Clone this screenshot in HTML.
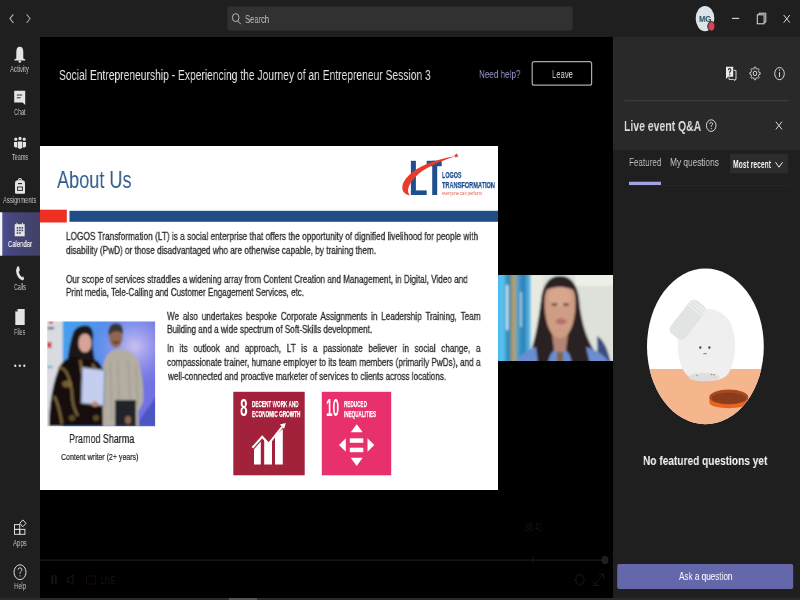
<!DOCTYPE html>
<html><head><meta charset="utf-8">
<style>
*{margin:0;padding:0;box-sizing:border-box}
html,body{width:800px;height:600px;overflow:hidden;background:#000;font-family:"Liberation Sans",sans-serif}
.a{position:absolute}
.tx{position:absolute;will-change:transform;white-space:nowrap;line-height:1;transform-origin:0 0;font-family:"Liberation Sans",sans-serif}
svg{position:absolute;left:0;top:0}
</style></head><body>
<svg width="800" height="600" viewBox="0 0 800 600">
<defs>
<linearGradient id="calg" x1="0" y1="0" x2="1" y2="0"><stop offset="0" stop-color="#4d509a"/><stop offset="0.3" stop-color="#45467a"/><stop offset="1" stop-color="#414168"/></linearGradient>
<linearGradient id="phbg" x1="0" y1="0" x2="1" y2="0.3"><stop offset="0" stop-color="#38aaf0"/><stop offset="0.55" stop-color="#5a8cea"/><stop offset="1" stop-color="#7272e2"/></linearGradient>
<radialGradient id="phglow" cx="0.8" cy="0.25" r="0.35"><stop offset="0" stop-color="#d8c8f4" stop-opacity="0.9"/><stop offset="1" stop-color="#a0a0f0" stop-opacity="0"/></radialGradient>
<linearGradient id="curt" x1="0" y1="0" x2="1" y2="0"><stop offset="0" stop-color="#3fb0e8"/><stop offset="0.2" stop-color="#5ec4f0"/><stop offset="0.35" stop-color="#2b86b8"/><stop offset="0.5" stop-color="#c8a060"/><stop offset="0.6" stop-color="#4aa0d0"/><stop offset="0.75" stop-color="#2a80b4"/><stop offset="0.9" stop-color="#5ab8e8"/><stop offset="1" stop-color="#e0e4dc"/></linearGradient>
<filter id="blur1" x="-5%" y="-5%" width="110%" height="110%"><feGaussianBlur stdDeviation="0.9"/></filter>
<clipPath id="vclip"><rect x="498" y="275" width="115" height="86"/></clipPath>
<clipPath id="pclip"><rect x="47.2" y="321.4" width="107.9" height="104.9"/></clipPath>
<clipPath id="eclip"><ellipse cx="705.4" cy="346.4" rx="58.4" ry="77.9"/></clipPath>
</defs>
<!-- backgrounds -->
<rect x="0" y="0" width="800" height="37" fill="#201f1f"/>
<rect x="0" y="37" width="40" height="563" fill="#201f1f"/>
<rect x="613" y="37" width="187" height="113" fill="#2a2929"/>
<rect x="613" y="150" width="187" height="450" fill="#201f1f"/>
<rect x="0" y="598" width="800" height="2" fill="#2a2a2a"/>
<rect x="229" y="598" width="28" height="2" fill="#555"/>
<!-- top bar -->
<polyline points="13.4,14.3 9.9,18.6 13.4,22.9" fill="none" stroke="#b4b4b4" stroke-width="1.1"/>
<polyline points="26.6,14.3 30.1,18.6 26.6,22.9" fill="none" stroke="#9a9a9a" stroke-width="1.1"/>
<rect x="227.5" y="6.6" width="345" height="24" rx="2" fill="#323131"/>
<ellipse cx="235.7" cy="17.6" rx="3.3" ry="4" fill="none" stroke="#b8b8b8" stroke-width="1"/>
<line x1="237.8" y1="21" x2="240.8" y2="24.2" stroke="#b8b8b8" stroke-width="1"/>
<ellipse cx="705" cy="18.6" rx="9.3" ry="12.7" fill="#dce4e9"/>
<ellipse cx="711.4" cy="26.3" rx="3.6" ry="4.8" fill="#d84452" stroke="#201f1f" stroke-width="1"/>
<line x1="732" y1="18.4" x2="739.2" y2="18.4" stroke="#dcdcdc" stroke-width="1.1"/>
<rect x="757.3" y="14.8" width="6.8" height="9" fill="none" stroke="#dcdcdc" stroke-width="1"/>
<polyline points="759,14.8 759,13.2 765.8,13.2 765.8,22.2 764.1,22.2" fill="none" stroke="#dcdcdc" stroke-width="1"/>
<line x1="783.7" y1="15" x2="789.8" y2="22.7" stroke="#dcdcdc" stroke-width="1"/>
<line x1="789.8" y1="15" x2="783.7" y2="22.7" stroke="#dcdcdc" stroke-width="1"/>
<!-- rail -->
<rect x="0" y="212.3" width="40" height="43.4" fill="url(#calg)"/>
<rect x="0" y="212.3" width="2.3" height="43.4" fill="#f4f4f4"/>
<g fill="#e4e4e4">
 <!-- bell -->
 <path d="M16.3,58.5 L16.3,52 Q16.3,46.7 19.8,46.7 Q23.3,46.7 23.3,52 L23.3,58.5 L25.3,59.6 L25.3,60.6 L14.4,60.6 L14.4,59.6 Z"/>
 <ellipse cx="19.8" cy="61.6" rx="1.3" ry="1.2"/>
 <!-- chat -->
 <path d="M14.2,90.8 L25.2,90.8 L25.2,105 L22.6,102.5 L14.2,102.5 Z"/>
</g>
<g stroke="#201f1f" stroke-width="0.9"><line x1="16.8" y1="95" x2="22.2" y2="95"/><line x1="16.8" y1="97.8" x2="20.6" y2="97.8"/></g>
<g fill="#e4e4e4">
 <!-- teams -->
 <ellipse cx="15.8" cy="139.2" rx="1.5" ry="1.6"/><ellipse cx="20" cy="138.4" rx="1.6" ry="1.7"/><ellipse cx="24.2" cy="139.2" rx="1.5" ry="1.6"/>
 <path d="M14,142 L17.2,142 L17.2,147.6 Q15.4,147.6 14,146.4 Z"/>
 <path d="M22.8,142 L26,142 L26,146.4 Q24.6,147.6 22.8,147.6 Z"/>
 <path d="M17.8,141.4 L22.2,141.4 L22.2,147.8 Q20,150 17.8,147.8 Z"/>
 <!-- assignments backpack -->
 <path d="M15,183.5 Q15,180.3 18,180.3 L22,180.3 Q25,180.3 25,183.5 L25,192.8 Q25,193.8 24,193.8 L16,193.8 Q15,193.8 15,192.8 Z"/>
 <ellipse cx="20" cy="179.6" rx="2" ry="1.7"/>
 <!-- calendar -->
 <path d="M14.7,224.2 L24.7,224.2 L24.7,236.3 L14.7,236.3 Z"/>
 <rect x="16.4" y="222.8" width="1" height="2"/><rect x="22" y="222.8" width="1" height="2"/>
 <!-- calls -->
 <path d="M17.2,266.4 L19,266.4 L19.8,270.6 L18.7,272 Q19.6,275.5 22,277.2 L23.2,276.3 L24.2,278.9 L22.6,280.4 Q16.6,278.4 16,270.4 Z"/>
 <!-- files -->
 <path d="M17.6,309 L24.7,309 L24.7,325 L15.3,325 L15.3,311.6 Z"/>
 <!-- dots -->
 <ellipse cx="15.3" cy="365.8" rx="1.1" ry="1.3"/><ellipse cx="19.8" cy="365.8" rx="1.1" ry="1.3"/><ellipse cx="24.3" cy="365.8" rx="1.1" ry="1.3"/>
</g>
<rect x="17.6" y="187" width="4.8" height="3.4" fill="none" stroke="#201f1f" stroke-width="0.9"/>
<line x1="18" y1="183.6" x2="22" y2="183.6" stroke="#201f1f" stroke-width="1.1"/>
<ellipse cx="20" cy="179.6" rx="0.8" ry="0.6" fill="#201f1f"/>
<g fill="#47467a"><rect x="16.7" y="227" width="1.6" height="1.6"/><rect x="19.1" y="227" width="1.6" height="1.6"/><rect x="21.5" y="227" width="1.6" height="1.6"/><rect x="16.7" y="229.6" width="1.6" height="1.6"/><rect x="19.1" y="229.6" width="1.6" height="1.6"/><rect x="21.5" y="229.6" width="1.6" height="1.6"/><rect x="16.7" y="232.2" width="1.6" height="1.6"/><rect x="19.1" y="232.2" width="1.6" height="1.6"/></g>
<path d="M15.3,311.6 L17.6,311.6 L17.6,309" fill="#201f1f"/>
<!-- apps -->
<g fill="none" stroke="#dcdcdc" stroke-width="1">
 <rect x="14.5" y="524.6" width="5.2" height="4.8"/><rect x="14.5" y="529.4" width="5.2" height="4.9"/><rect x="19.7" y="529.4" width="5.2" height="4.9"/>
 <path d="M22.8,519.9 L26,523.3 L22.8,526.8 L19.8,523.3 Z"/>
 <ellipse cx="20" cy="572.2" rx="6" ry="7.4"/>
</g>
<path d="M18.1,569.8 Q18.1,567.8 20,567.8 Q21.9,567.8 21.9,569.8 Q21.9,571 20.6,571.8 Q20,572.3 20,573.8" fill="none" stroke="#dcdcdc" stroke-width="0.9"/>
<ellipse cx="20" cy="575.8" rx="0.6" ry="0.6" fill="#dcdcdc"/>
<!-- main title area -->
<rect x="532.2" y="61.6" width="59.4" height="23.6" rx="2" fill="none" stroke="#a9a9a9" stroke-width="1.2"/>
<!-- slide -->
<rect x="40" y="146" width="458" height="344" fill="#ffffff"/>
<rect x="40" y="209.7" width="26.8" height="12.8" fill="#ee3022"/>
<rect x="69.5" y="210.8" width="428.5" height="11" fill="#1f4e86"/>
<!-- logo -->
<g fill="#1e4f8e">
 <rect x="410.9" y="160.8" width="5" height="34.2"/><rect x="410.9" y="190.4" width="15.8" height="4.6"/>
 <rect x="426.7" y="160.8" width="15" height="5.4"/><rect x="432.2" y="160.8" width="5" height="34.2"/>
</g>
<path d="M409.8,195.5 C400,193.5 399,183 412,172.5 C422,164.5 438,159 455.5,156 C441,161 427,167 419,173.5 C409.5,182 405.5,190 409.8,195.5 Z" fill="#e93b2c"/>
<path d="M456.3,152.9 L457,154.8 L458.8,154.9 L457.4,156 L457.9,157.8 L456.3,156.7 L454.7,157.8 L455.2,156 L453.8,154.9 L455.6,154.8 Z" fill="#e93b2c"/>
<!-- photo -->
<g clip-path="url(#pclip)"><g filter="url(#blur1)">
 <rect x="45" y="319" width="112" height="110" fill="url(#phbg)"/>
 <rect x="45" y="319" width="112" height="110" fill="url(#phglow)"/>
 <path d="M135,426.3 L157,395 L157,426.3 Z" fill="#3a48b8" opacity="0.7"/>
 <rect x="45" y="319" width="17.7" height="110" fill="#d9dbe0"/>
 <rect x="49" y="320" width="4" height="3.5" fill="#d03030"/>
 <rect x="47.2" y="342" width="4.2" height="6" fill="#d03838"/>
 <rect x="47.5" y="327" width="6.5" height="2.2" fill="#505860"/>
 <rect x="47.2" y="366" width="5.5" height="2" fill="#40b0c0"/>
 <!-- woman hair -->
 <path d="M66,370 C68,356 70,340 74,331 C77,326 83,325 87,325.5 C92,326.5 94,332 93,340 C92,348 94,356 96,366 Z" fill="#1a1412"/>
 <ellipse cx="85" cy="343" rx="6.6" ry="9.4" fill="#d6a496"/>
 <path d="M78,337 C78,329 82,327 87,327 C91,327 92,331 92,336 C89,332 82,332 78,337 Z" fill="#1a1412"/>
 <!-- woman body -->
 <path d="M49,426.3 C49,405 53,380 60,366 C64,359 70,357 76,357 L88,360 C96,358 100,362 103,370 C105,392 106,410 104,426.3 Z" fill="#15110e"/>
 <path d="M58,368 C66,366 70,378 72,392 C72,400 74,410 78,416 M54,396 C58,402 60,412 62,424 M80,360 C82,366 80,372 84,376 M92,364 C96,368 98,372 100,380" fill="none" stroke="#8e7442" stroke-width="2.6" opacity="0.8"/>
 <ellipse cx="67" cy="384" rx="5" ry="3.4" fill="#8a6e3c" opacity="0.8"/>
 <ellipse cx="96" cy="418" rx="3" ry="3" fill="#7a6034" opacity="0.7"/>
 <ellipse cx="72" cy="418" rx="3" ry="3" fill="#7a6034" opacity="0.7"/>
 <!-- man -->
 <path d="M103,426.3 C103,405 101,376 104,362 C106,354 112,350 118,349 C126,349 134,352 138,360 C142,372 144,388 143,402 L138,412 L139,426.3 Z" fill="#b4aea2"/>
 <ellipse cx="115.8" cy="337.5" rx="6.8" ry="10.4" fill="#916650"/>
 <path d="M108.6,336 C107.5,327 111,323.2 116,323.2 C121.5,323.2 123.5,327 123,335 C121,330 112,330 108.6,336 Z" fill="#3a3634"/>
 <path d="M110,362 L112,420 M118,360 L119,400 M128,360 L130,400 M136,366 L138,405" stroke="#8e887c" stroke-width="1" fill="none" opacity="0.6"/>
 <rect x="113" y="341.6" width="6" height="1.6" fill="#3a2a22"/>
 <rect x="115" y="400" width="21" height="26.5" fill="#24242c"/>
 <ellipse cx="128" cy="420" rx="3" ry="4" fill="#8e6450"/>
 <!-- certificate -->
 <path d="M82.3,367.5 L104.7,370.3 L103.8,405.7 L81.4,403 Z" fill="#c4cff0" stroke="#8a90a4" stroke-width="1.4"/>
 <ellipse cx="95" cy="404" rx="3.2" ry="2.8" fill="#c08a74"/>
</g></g>
<!-- SDG 8 -->
<rect x="233.3" y="391.8" width="71.4" height="83.5" fill="#a2223c"/>
<g fill="#ffffff">
 <path d="M254,464.5 L254,449.2 L260.8,441.5 L260.8,464.5 Z"/>
 <path d="M264.2,464.5 L264.2,438.5 L268.6,445 L272,441 L272,464.5 Z"/>
 <path d="M275,464.5 L275,436 L282.8,429 L282.8,464.5 Z"/>
 <path d="M285.8,423 L279.8,424.5 L284.2,428.8 Z"/>
</g>
<polyline points="252.4,447.8 262.2,436.8 268.6,443.8 282.2,426.8" fill="none" stroke="#ffffff" stroke-width="2.1"/>
<!-- SDG 10 -->
<rect x="321.8" y="391.8" width="69.4" height="83.5" fill="#e8306c"/>
<g fill="#ffffff">
 <path d="M356.7,424.3 L362.7,432.3 L350.7,432.3 Z"/>
 <path d="M356.7,466 L362.7,457.8 L350.7,457.8 Z"/>
 <path d="M339,445 L345.8,438.3 L345.8,451.8 Z"/>
 <path d="M374.3,445 L367.5,438.3 L367.5,451.8 Z"/>
 <rect x="349.8" y="438.3" width="13.5" height="4.5"/>
 <rect x="349.8" y="447.7" width="13.5" height="4.5"/>
</g>
<!-- video -->
<g clip-path="url(#vclip)"><g filter="url(#blur1)">
 <rect x="495" y="272" width="120" height="92" fill="#dde1da"/>
 <rect x="575" y="272" width="40" height="14" fill="#eceee8"/>
 <rect x="495" y="272" width="38" height="92" fill="url(#curt)"/>
 <rect x="506" y="285" width="2.5" height="45" fill="#ffffff" opacity="0.7"/>
 <rect x="520" y="292" width="2" height="35" fill="#ffffff" opacity="0.5"/>
 <rect x="531" y="275" width="12" height="90" fill="#e8eae2"/>
 <path d="M597,336 C604,340 608,350 611,364 L598,364 Z" fill="#3c4c80"/>
 <path d="M527,364 C534,345 538,325 541,300 C543,283 550,276 560,276 C570,276 577,283 579,298 C581,322 587,345 604,364 Z" fill="#2a2420"/>
 <path d="M516,364 C518,356 526,350 536,347 L538,364 Z" fill="#6a8ed0"/>
 <path d="M586,347 C598,350 606,357 610,364 L590,364 Z" fill="#6a8ed0"/>
 <path d="M548,364 C549,356 552,351 556,349 L560,352 L564,349 C568,351 571,356 572,364 Z" fill="#6a8ed0"/>
 <path d="M552,334 L568,334 L566,350 L560,354 L554,350 Z" fill="#b48474"/>
 <path d="M544.5,302 C544.5,288 551,281 560,281 C569,281 575.5,288 575.5,302 C575.5,322 570,338 560,338 C550,338 544.5,322 544.5,302 Z" fill="#cf9c84"/>
 <ellipse cx="560" cy="297" rx="11" ry="10" fill="#dcae96" opacity="0.55"/>
 <path d="M545,291 C548,281 555,278.5 560,278.5 C567,278.5 574,282 576,292 C570,286 552,285 545,291 Z" fill="#2a2420"/>
 <ellipse cx="554.5" cy="304.5" rx="3" ry="1.3" fill="#5a3a30"/>
 <ellipse cx="566" cy="304.5" rx="3" ry="1.3" fill="#5a3a30"/>
 <ellipse cx="561" cy="321.5" rx="5.5" ry="3" fill="#b86e6e"/>
 <rect x="557" y="352" width="6" height="12" fill="#7a6848"/>
</g></g>
<!-- player controls -->
<rect x="40" y="559.5" width="565" height="1.2" fill="#1d1d1d"/>
<ellipse cx="605" cy="560" rx="3.5" ry="4" fill="#202020"/>
<g fill="#141414"><rect x="51.2" y="575.2" width="2" height="9"/><rect x="54.8" y="575.2" width="2" height="9"/></g>
<path d="M67.5,577.5 L70,577.5 L73,575 L73,584.5 L70,582 L67.5,582 Z" fill="none" stroke="#161616" stroke-width="1"/>
<rect x="86.5" y="576" width="9" height="8" fill="none" stroke="#180a0a" stroke-width="1"/>
<path d="M583.22,578.80 L584.26,578.91 L584.26,580.49 L583.22,580.60 L582.69,582.20 L583.37,583.20 L582.48,584.32 L581.68,583.47 L580.41,584.13 L580.33,585.45 L579.07,585.45 L578.99,584.13 L577.72,583.47 L576.92,584.32 L576.03,583.20 L576.71,582.20 L576.18,580.60 L575.14,580.49 L575.14,578.91 L576.18,578.80 L576.71,577.20 L576.03,576.20 L576.92,575.08 L577.72,575.93 L578.99,575.27 L579.07,573.95 L580.33,573.95 L580.41,575.27 L581.68,575.93 L582.48,575.08 L583.37,576.20 L582.69,577.20 Z" fill="none" stroke="#161616" stroke-width="1"/>
<path d="M594,585.5 L603.5,574 M598.5,574 L603.5,574 L603.5,579 M594,580.5 L594,585.5 L599,585.5" fill="none" stroke="#161616" stroke-width="1"/>
<rect x="532.5" y="556" width="1" height="8" fill="#141414"/>
<!-- panel -->
<g fill="none" stroke="#d8d8d8" stroke-width="1">
 <path d="M726,66.8 L733.2,66.8 L733.2,76.8 L728.2,76.8 L726,79 Z" fill="#ececec" stroke="none"/>
 <path d="M733.6,70.4 L736,70.4 L736,79.4 L734.8,79.4 L734.8,80.6 L733.4,79.4 L729,79.4 L729,77.4"/>
 <ellipse cx="755" cy="73.4" rx="1.8" ry="2.2"/>
 <ellipse cx="779.5" cy="73.6" rx="4.8" ry="6.1"/>
 <line x1="779.5" y1="72.2" x2="779.5" y2="77"/>
 <ellipse cx="711.2" cy="125.6" rx="4.8" ry="5.8"/>
 <line x1="775.8" y1="121.7" x2="782" y2="129.4"/>
 <line x1="782" y1="121.7" x2="775.8" y2="129.4"/>
</g>
<path d="M758.97,72.41 L760.15,72.52 L760.15,74.28 L758.97,74.39 L758.38,76.16 L759.15,77.26 L758.14,78.50 L757.24,77.56 L755.81,78.29 L755.71,79.74 L754.29,79.74 L754.19,78.29 L752.76,77.56 L751.86,78.50 L750.85,77.26 L751.62,76.16 L751.03,74.39 L749.85,74.28 L749.85,72.52 L751.03,72.41 L751.62,70.64 L750.85,69.54 L751.86,68.30 L752.76,69.24 L754.19,68.51 L754.29,67.06 L755.71,67.06 L755.81,68.51 L757.24,69.24 L758.14,68.30 L759.15,69.54 L758.38,70.64 Z" fill="none" stroke="#d0d0d0" stroke-width="0.9"/>
<circle cx="779.5" cy="70" r="0.7" fill="#d8d8d8"/>
<path d="M728.4,70.2 Q728.4,68.6 729.6,68.6 Q730.9,68.6 730.9,70.2 Q730.9,71.2 729.7,72 L729.7,73.2" fill="none" stroke="#2a2929" stroke-width="1.1"/><rect x="729.1" y="74.2" width="1.2" height="1.2" fill="#2a2929"/>
<path d="M709.7,123.9 Q709.7,122.5 711.2,122.5 Q712.7,122.5 712.7,123.9 Q712.7,124.8 711.3,125.6 L711.3,126.9" fill="none" stroke="#d8d8d8" stroke-width="0.9"/>
<circle cx="711.3" cy="128.6" r="0.6" fill="#d8d8d8"/>
<rect x="624.3" y="100.2" width="163.7" height="1" fill="#444343"/>
<rect x="730" y="154" width="58.2" height="19.2" fill="#2d2c2c"/>
<polyline points="775.5,162.2 779,167.2 782.5,162.2" fill="none" stroke="#e8e8e8" stroke-width="1"/>
<rect x="629" y="185.2" width="159" height="0.8" fill="#2a2929"/>
<rect x="629" y="181.7" width="32" height="3.3" fill="#a0a3e4"/>
<!-- illustration -->
<g clip-path="url(#eclip)">
 <rect x="640" y="260" width="130" height="170" fill="#ffffff"/>
 <rect x="640" y="369" width="130" height="60" fill="#f5b58d"/>
 <path d="M684,318 C695,305 720,305 730,322 C738,338 736,362 728,374 C722,382 700,384 688,376 C676,366 674,335 684,318 Z" fill="#efefef"/>
 <ellipse cx="704" cy="377" rx="15.5" ry="4.2" fill="#dedede"/>
 <g transform="rotate(-52 688 320)"><rect x="667" y="310" width="42" height="19" rx="6" fill="#e2e3e3"/><line x1="700" y1="310" x2="700" y2="329" stroke="#f2f2f2" stroke-width="1"/><line x1="703" y1="310" x2="703" y2="329" stroke="#f2f2f2" stroke-width="1"/><line x1="706" y1="310" x2="706" y2="329" stroke="#f2f2f2" stroke-width="1"/></g>
 <ellipse cx="700.3" cy="347.6" rx="1.2" ry="1.4" fill="#555"/>
 <ellipse cx="709.4" cy="347.6" rx="1.2" ry="1.4" fill="#555"/>
 <rect x="703.4" y="353.3" width="3.2" height="0.9" fill="#666"/>
 <circle cx="697" cy="375.5" r="0.7" fill="#c08040"/><circle cx="711.5" cy="374.5" r="0.8" fill="#c08040"/><circle cx="714" cy="374.8" r="0.8" fill="#c08040"/>
 <path d="M709.4,397 L709.4,402.5 C709.4,410 748.2,410 748.2,402.5 L748.2,397 Z" fill="#e8651f"/>
 <ellipse cx="728.8" cy="397" rx="19.4" ry="7.6" fill="#a84a20"/>
 <ellipse cx="728.8" cy="398.2" rx="17" ry="5.6" fill="#8a3c1c"/>
</g>
<!-- ask button -->
<rect x="617.2" y="564" width="176" height="25" rx="2" fill="#6567ab"/>
</svg>
<div class="tx" style="left:245.40px;top:12.90px;font-size:11.6px;color:#c4c4c4;transform:scaleX(0.6559);">Search</div>
<div class="tx" style="left:58.60px;top:67.00px;font-size:15.4px;color:#e4e4e4;transform:scaleX(0.6685);">Social Entrepreneurship - Experiencing the Journey of an Entrepreneur Session 3</div>
<div class="tx" style="left:479.00px;top:68.80px;font-size:10.8px;color:#9799cf;transform:scaleX(0.7497);">Need help?</div>
<div class="tx" style="left:551.80px;top:68.80px;font-size:11.2px;color:#e8e8e8;transform:scaleX(0.6808);">Leave</div>
<div class="tx" style="left:10.00px;top:65.00px;font-size:8.5px;color:#c2c2c2;transform:scaleX(0.6975);">Activity</div>
<div class="tx" style="left:14.00px;top:108.30px;font-size:8.5px;color:#c2c2c2;transform:scaleX(0.6454);">Chat</div>
<div class="tx" style="left:12.00px;top:152.70px;font-size:8.5px;color:#c2c2c2;transform:scaleX(0.6455);">Teams</div>
<div class="tx" style="left:3.30px;top:196.00px;font-size:8.5px;color:#c2c2c2;transform:scaleX(0.6817);">Assignments</div>
<div class="tx" style="left:8.00px;top:239.60px;font-size:8.5px;color:#f0f0f4;transform:scaleX(0.6924);-webkit-text-stroke:0.2px #f0f0f4;">Calendar</div>
<div class="tx" style="left:14.20px;top:283.30px;font-size:8.5px;color:#c2c2c2;transform:scaleX(0.6222);">Calls</div>
<div class="tx" style="left:14.20px;top:327.70px;font-size:8.5px;color:#c2c2c2;transform:scaleX(0.6273);">Files</div>
<div class="tx" style="left:13.20px;top:538.70px;font-size:8.5px;color:#c2c2c2;transform:scaleX(0.7059);">Apps</div>
<div class="tx" style="left:14.00px;top:581.70px;font-size:8.5px;color:#c2c2c2;transform:scaleX(0.6872);">Help</div>
<div class="tx" style="left:56.70px;top:167.60px;font-size:24.5px;color:#2f5b8d;transform:scaleX(0.7401);">About Us</div>
<div class="tx" style="left:65.80px;top:232.00px;font-size:10.4px;color:#2c2c2c;transform:scaleX(0.7951);-webkit-text-stroke:0.3px #2c2c2c;">LOGOS Transformation (LT) is a social enterprise that offers the opportunity of dignified livelihood for people with</div>
<div class="tx" style="left:65.80px;top:245.50px;font-size:10.4px;color:#2c2c2c;transform:scaleX(0.7919);-webkit-text-stroke:0.3px #2c2c2c;">disability (PwD) or those disadvantaged who are otherwise capable, by training them.</div>
<div class="tx" style="left:65.80px;top:274.70px;font-size:10.4px;color:#2c2c2c;transform:scaleX(0.7853);-webkit-text-stroke:0.3px #2c2c2c;">Our scope of services straddles a widening array from Content Creation and Management, in Digital, Video and</div>
<div class="tx" style="left:65.80px;top:288.20px;font-size:10.4px;color:#2c2c2c;transform:scaleX(0.7735);-webkit-text-stroke:0.3px #2c2c2c;">Print media, Tele-Calling and Customer Engagement Services, etc.</div>
<div class="tx" style="left:167.20px;top:311.50px;font-size:10.4px;color:#2c2c2c;transform:scaleX(0.7856);width:399.07px;text-align:justify;text-align-last:justify;white-space:normal;-webkit-text-stroke:0.3px #2c2c2c;">We also undertakes bespoke Corporate Assignments in Leadership Training, Team</div>
<div class="tx" style="left:167.20px;top:325.30px;font-size:10.4px;color:#2c2c2c;transform:scaleX(0.7843);-webkit-text-stroke:0.3px #2c2c2c;">Building and a wide spectrum of Soft-Skills development.</div>
<div class="tx" style="left:167.20px;top:344.20px;font-size:10.4px;color:#2c2c2c;transform:scaleX(0.7856);width:399.07px;text-align:justify;text-align-last:justify;white-space:normal;-webkit-text-stroke:0.3px #2c2c2c;">In its outlook and approach, LT is a passionate believer in social change, a</div>
<div class="tx" style="left:167.20px;top:358.00px;font-size:10.4px;color:#2c2c2c;transform:scaleX(0.7856);width:399.07px;text-align:justify;text-align-last:justify;white-space:normal;-webkit-text-stroke:0.3px #2c2c2c;">compassionate trainer, humane employer to its team members (primarily PwDs), and a</div>
<div class="tx" style="left:167.98px;top:372.20px;font-size:10.4px;color:#2c2c2c;transform:scaleX(0.7833);-webkit-text-stroke:0.3px #2c2c2c;">well-connected and proactive marketer of services to clients across locations.</div>
<div class="tx" style="left:68.57px;top:433.30px;font-size:12.3px;color:#262626;transform:scaleX(0.7284);-webkit-text-stroke:0.2px #262626;">Pramod Sharma</div>
<div class="tx" style="left:60.80px;top:452.90px;font-size:9.3px;color:#222222;transform:scaleX(0.7544);-webkit-text-stroke:0.2px #222;">Content writer (2+ years)</div>
<div class="tx" style="left:624.01px;top:117.90px;font-size:15.2px;color:#dcdcdc;font-weight:700;transform:scaleX(0.6883);">Live event Q&amp;A</div>
<div class="tx" style="left:629.00px;top:156.40px;font-size:11.6px;color:#c8c8c8;transform:scaleX(0.6963);">Featured</div>
<div class="tx" style="left:670.00px;top:156.40px;font-size:11.6px;color:#c8c8c8;transform:scaleX(0.7152);">My questions</div>
<div class="tx" style="left:732.60px;top:160.20px;font-size:10.2px;color:#ffffff;font-weight:700;transform:scaleX(0.6646);">Most recent</div>
<div class="tx" style="left:642.80px;top:454.30px;font-size:13.6px;color:#f2f2f2;font-weight:700;transform:scaleX(0.7449);">No featured questions yet</div>
<div class="tx" style="left:678.70px;top:569.80px;font-size:11.6px;color:#ffffff;transform:scaleX(0.7024);">Ask a question</div>
<div class="tx" style="left:100.70px;top:574.00px;font-size:11.6px;color:#161616;transform:scaleX(0.5629);">LIVE</div>
<div class="tx" style="left:525.00px;top:523.00px;font-size:10px;color:#151515;transform:scaleX(0.7069);">38:41</div>
<div class="tx" style="left:699.00px;top:13.70px;font-size:9.7px;color:#25505c;font-weight:700;transform:scaleX(0.7963);">MG</div>
<div class="tx" style="left:442.20px;top:171.30px;font-size:8.5px;color:#1e4f8e;font-weight:700;transform:scaleX(0.6349);-webkit-text-stroke:0.25px #1e4f8e;">LOGOS</div>
<div class="tx" style="left:442.20px;top:181.00px;font-size:8.7px;color:#1e4f8e;font-weight:700;transform:scaleX(0.6470);-webkit-text-stroke:0.25px #1e4f8e;">TRANSFORMATION</div>
<div class="tx" style="left:442.20px;top:191.00px;font-size:5.6px;color:#e05a48;transform:scaleX(0.7342);">everyone can perform</div>
<div class="tx" style="left:240.20px;top:397.20px;font-size:23.5px;color:#ffffff;font-weight:700;transform:scaleX(0.5769);">8</div>
<div class="tx" style="left:252.20px;top:398.75px;font-size:9.6px;color:#ffffff;font-weight:700;transform:scaleX(0.4875);-webkit-text-stroke:0.25px #ffffff;">DECENT WORK AND</div>
<div class="tx" style="left:252.20px;top:409.50px;font-size:9.2px;color:#ffffff;font-weight:700;transform:scaleX(0.5100);-webkit-text-stroke:0.25px #ffffff;">ECONOMIC GROWTH</div>
<div class="tx" style="left:326.20px;top:397.20px;font-size:23.5px;color:#ffffff;font-weight:700;transform:scaleX(0.5026);">10</div>
<div class="tx" style="left:343.80px;top:398.75px;font-size:9.6px;color:#ffffff;font-weight:700;transform:scaleX(0.4830);-webkit-text-stroke:0.25px #ffffff;">REDUCED</div>
<div class="tx" style="left:343.80px;top:409.50px;font-size:9.2px;color:#ffffff;font-weight:700;transform:scaleX(0.4977);-webkit-text-stroke:0.25px #ffffff;">INEQUALITIES</div>
</body></html>
